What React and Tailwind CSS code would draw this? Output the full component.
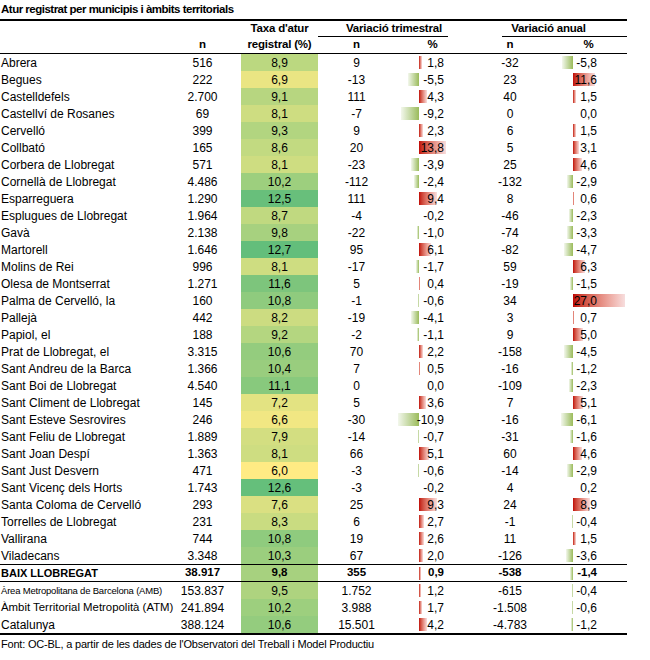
import React from "react";

const rows = [
  ["Abrera", "516", 8.9, "9", 1.8, "-32", -5.8],
  ["Begues", "222", 6.9, "-13", -5.5, "23", 11.6],
  ["Castelldefels", "2.700", 9.1, "111", 4.3, "40", 1.5],
  ["Castellví de Rosanes", "69", 8.1, "-7", -9.2, "0", 0.0],
  ["Cervelló", "399", 9.3, "9", 2.3, "6", 1.5],
  ["Collbató", "165", 8.6, "20", 13.8, "5", 3.1],
  ["Corbera de Llobregat", "571", 8.1, "-23", -3.9, "25", 4.6],
  ["Cornellà de Llobregat", "4.486", 10.2, "-112", -2.4, "-132", -2.9],
  ["Esparreguera", "1.290", 12.5, "111", 9.4, "8", 0.6],
  ["Esplugues de Llobregat", "1.964", 8.7, "-4", -0.2, "-46", -2.3],
  ["Gavà", "2.138", 9.8, "-22", -1.0, "-74", -3.3],
  ["Martorell", "1.646", 12.7, "95", 6.1, "-82", -4.7],
  ["Molins de Rei", "996", 8.1, "-17", -1.7, "59", 6.3],
  ["Olesa de Montserrat", "1.271", 11.6, "5", 0.4, "-19", -1.5],
  ["Palma de Cervelló, la", "160", 10.8, "-1", -0.6, "34", 27.0],
  ["Pallejà", "442", 8.2, "-19", -4.1, "3", 0.7],
  ["Papiol, el", "188", 9.2, "-2", -1.1, "9", 5.0],
  ["Prat de Llobregat, el", "3.315", 10.6, "70", 2.2, "-158", -4.5],
  ["Sant Andreu de la Barca", "1.366", 10.4, "7", 0.5, "-16", -1.2],
  ["Sant Boi de Llobregat", "4.540", 11.1, "0", 0.0, "-109", -2.3],
  ["Sant Climent de Llobregat", "145", 7.2, "5", 3.6, "7", 5.1],
  ["Sant Esteve Sesrovires", "246", 6.6, "-30", -10.9, "-16", -6.1],
  ["Sant Feliu de Llobregat", "1.889", 7.9, "-14", -0.7, "-31", -1.6],
  ["Sant Joan Despí", "1.363", 8.1, "66", 5.1, "60", 4.6],
  ["Sant Just Desvern", "471", 6.0, "-3", -0.6, "-14", -2.9],
  ["Sant Vicenç dels Horts", "1.743", 12.6, "-3", -0.2, "4", 0.2],
  ["Santa Coloma de Cervelló", "293", 7.6, "25", 9.3, "24", 8.9],
  ["Torrelles de Llobregat", "231", 8.3, "6", 2.7, "-1", -0.4],
  ["Vallirana", "744", 10.8, "19", 2.6, "11", 1.5],
  ["Viladecans", "3.348", 10.3, "67", 2.0, "-126", -3.6],
];

const total = ["BAIX LLOBREGAT", "38.917", 9.8, "355", 0.9, "-538", -1.4];

const extra = [
  ["Àrea Metropolitana de Barcelona (AMB)", "153.837", 9.5, "1.752", 1.2, "-615", -0.4],
  ["Àmbit Territorial Metropolità (ATM)", "241.894", 10.2, "3.988", 1.7, "-1.508", -0.6],
  ["Catalunya", "388.124", 10.6, "15.501", 4.2, "-4.783", -1.2],
];

const fmt = (v) => v.toFixed(1).replace(".", ",");

function taxaColor(v) {
  const t = Math.max(0, Math.min(1, (v - 6) / (12.7 - 6)));
  const r = Math.round(255 + (99 - 255) * t);
  const g = Math.round(235 + (190 - 235) * t);
  const b = Math.round(132 + (123 - 132) * t);
  return `rgb(${r},${g},${b})`;
}

function PctCell({ v, axis, width, pr, bold }) {
  const len = Math.abs(v) * 1.93;
  const show = Math.abs(v) >= 0.3;
  const w = Math.max(1, Math.round(len));
  return (
    <div className="relative h-full shrink-0 flex items-center justify-end" style={{ width, paddingRight: pr }}>
      {show && v > 0 && (
        <div
          className="absolute top-[2px] h-[13px] bg-gradient-to-r from-[#c00000] to-[#f7dede]"
          style={{ left: axis, width: w }}
        />
      )}
      {show && v < 0 && (
        <div
          className="absolute top-[2px] h-[13px] bg-gradient-to-l from-[#9bbb59] to-[#f3f7ec]"
          style={{ left: axis - w, width: w }}
        />
      )}
      <span className={`relative ${bold ? "font-bold text-[11.5px]" : ""}`}>{fmt(v)}</span>
    </div>
  );
}

function Row({ r, bold, nameClass, border }) {
  const [name, n, taxa, tn, tp, an, ap] = r;
  const b = bold ? "font-bold text-[11.5px]" : "";
  return (
    <div className={`flex h-[17px] items-center ${border || ""}`}>
      <div className={`w-[170px] shrink-0 pl-[1px] whitespace-nowrap ${nameClass || ""}`}>{name}</div>
      <div className={`w-[65px] shrink-0 text-center ${b}`}>{n}</div>
      <div className="w-[6px] shrink-0" />
      <div
        className={`w-[77px] shrink-0 h-full flex items-center justify-center ${b}`}
        style={{ backgroundColor: taxaColor(taxa) }}
      >
        {fmt(taxa)}
      </div>
      <div className={`w-[77px] shrink-0 text-center ${b}`}>{tn}</div>
      <PctCell v={tp} axis={24} width={75} pr={26} bold={bold} />
      <div className={`w-[80px] shrink-0 text-center ${b}`}>{an}</div>
      <PctCell v={ap} axis={23} width={77} pr={30} bold={bold} />
    </div>
  );
}

export default function App() {
  return (
    <div
      className="w-[650px] h-[660px] bg-white text-black text-[12px] leading-none"
      style={{ fontFamily: '"Liberation Sans Narrow", "Arial Narrow", "Liberation Sans", sans-serif' }}
    >
      <div className="w-[627px]">
        <div className="h-[19px] flex items-center pl-[1px] font-bold text-[11.5px] tracking-[-0.5px]">
          Atur registrat per municipis i àmbits territorials
        </div>
        <div className="h-[2px] bg-black" />
        <div className="flex h-[16px] font-bold text-[11.5px] tracking-[-0.2px]">
          <div className="w-[241px] shrink-0" />
          <div className="w-[77px] shrink-0 flex items-center justify-center">Taxa d'atur</div>
          <div className="w-[152px] shrink-0 h-full flex flex-col">
            <div className="flex-1 flex items-center justify-center">Variació trimestral</div>
            <div className="h-[1px] bg-black mr-[22px]" />
          </div>
          <div className="w-[157px] shrink-0 h-full flex flex-col">
            <div className="flex-1 flex items-center justify-center">Variació anual</div>
            <div className="h-[1px] bg-black ml-[32px]" />
          </div>
        </div>
        <div className="flex h-[17px] items-center font-bold text-[11.5px] tracking-[-0.2px] border-b border-black">
          <div className="w-[170px] shrink-0" />
          <div className="w-[65px] shrink-0 text-center">n</div>
          <div className="w-[6px] shrink-0" />
          <div className="w-[77px] shrink-0 text-center">registral (%)</div>
          <div className="w-[77px] shrink-0 text-center">n</div>
          <div className="w-[75px] shrink-0 text-center">%</div>
          <div className="w-[80px] shrink-0 text-center">n</div>
          <div className="w-[77px] shrink-0 text-center">%</div>
        </div>
        {rows.map((r) => (
          <Row key={r[0]} r={r} />
        ))}
        <Row r={total} bold nameClass="font-bold text-[11px]" border="border-y border-black h-[18px]" />
        {extra.map((r, i) => (
          <Row key={r[0]} r={r} nameClass={i === 0 ? "text-[9.5px] tracking-[-0.2px]" : i === 1 ? "text-[11.4px]" : ""} />
        ))}
        <div className="h-[2px] bg-black" />
        <div className="h-[18px] flex items-center pl-[1px] text-[11px] tracking-[-0.2px]">
          Font: OC-BL, a partir de les dades de l'Observatori del Treball i Model Productiu
        </div>
      </div>
    </div>
  );
}
